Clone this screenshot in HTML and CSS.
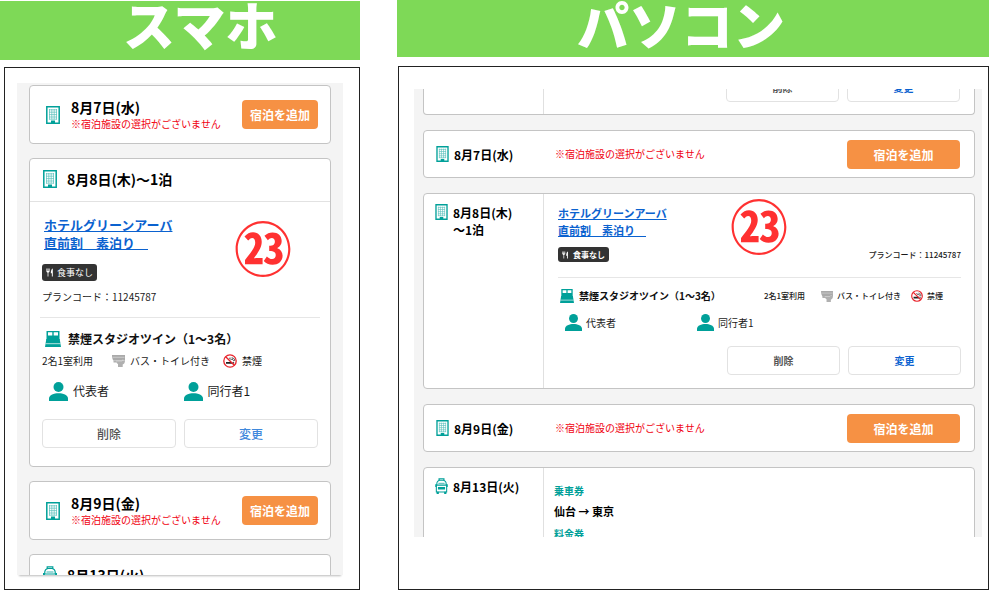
FILE: index.html
```html
<!DOCTYPE html>
<html lang="ja">
<head>
<meta charset="utf-8">
<meta name="viewport" content="width=device-width, initial-scale=1">
<title>宿泊の選択</title>
<link rel="stylesheet" href="styles.css">
</head>
<body>
<svg class="defs" aria-hidden="true">
  <symbol id="i-hotel" viewBox="0 0 14 18">
    <path d="M.8.8h12.4v16.4H.8z" fill="#fff" stroke="currentColor" stroke-width="1.500"/>
    <path d="M3 3.800h8M3 6.200h8M3 8.600h8M3 11h8M3 13.200h8M3.500 3v10.500M5.800 3v10.500M8.200 3v10.500M10.500 3v10.500" stroke="currentColor" stroke-width=".7" opacity=".65"/>
    <path d="M5 14.500h4V18H5z" fill="currentColor"/>
  </symbol>
  <symbol id="i-bed" viewBox="0 0 16 16">
    <path d="M1.500 0h13v9h-13z" fill="currentColor"/>
    <path d="M3 1.300h4.300v3.200H3zM8.700 1.300H13v3.200H8.700z" fill="#fff"/>
    <path d="M1.300 8h13.400l1.300 8H0z" fill="currentColor"/>
    <path d="M.5 12.700h15" stroke="#fff" stroke-width=".7"/>
  </symbol>
  <symbol id="i-person" viewBox="0 0 19 19">
    <circle cx="9.500" cy="5" r="5" fill="currentColor"/>
    <path d="M0 19v-2.500C0 13 5 11.200 9.500 11.200S19 13 19 16.500V19z" fill="currentColor"/>
  </symbol>
  <symbol id="i-bath" viewBox="0 0 13 12">
    <path d="M0 0h13v5.500H11.500L11 4.500 10 5.600H1.500C.6 4.500 0 3 0 0z" fill="#aaa"/>
    <path d="M1.500 5.500h3v2h-3zM4 5.500h9c0 2.500-.9 3.500-2.300 3.900V12H6V9C4.800 8.300 4 7.200 4 5.500z" fill="#b0b0b0"/>
    <path d="M.5 2.300h12M4 6h6" stroke="#e0e0e0" stroke-width=".6"/>
  </symbol>
  <symbol id="i-nosmoke" viewBox="0 0 14 14">
    <path d="M3 8h6.500v1.800H3zM10.200 8h.9v1.800h-.9z" fill="#222"/>
    <path d="M7 3.500c-1.200 1.500 1 1.800 2.200 1.900 1.200.1 1.300.9 1.300 1.800M9 3.300c-.3 1 .9 1 1.800 1.200.9.300.9 1.500.8 2.500" fill="none" stroke="#222" stroke-width=".8"/>
    <circle cx="7" cy="7" r="6.200" fill="none" stroke="#e8222a" stroke-width="1.300"/>
    <path d="M2.700 2.700l8.600 8.600" stroke="#e8222a" stroke-width="1.400"/>
  </symbol>
  <symbol id="i-meal" viewBox="0 0 10 10">
    <path d="M1 0v3.500M2.500 0v3.500M4 0v3.500M2.500 3v7" stroke="currentColor" stroke-width="1"/>
    <path d="M.6 3h3.800c0 1.500-.8 2-1.900 2S.6 4.500.6 3z" fill="currentColor"/>
    <path d="M8.500 0v10H7.300V6H6c0-3 .7-5.500 2.500-6z" fill="currentColor"/>
  </symbol>
  <symbol id="i-train" viewBox="0 0 14 18">
    <path d="M4.200 2.500V.8h5.600v1.700M1.700 8V7c0-2.800 1.600-4.200 3.300-4.500h4c1.700.3 3.300 1.700 3.300 4.500v1" fill="none" stroke="currentColor" stroke-width="1.200"/>
    <path d="M1.200 8h11.600v7.800H1.200z" fill="none" stroke="currentColor" stroke-width="1.200"/>
    <path d="M0 7h1.500v3H0zM12.500 7H14v3h-1.500zM3 10h8v3H3zM1.500 15.500H4V18H1.500zM10 15.500h2.500V18H10z" fill="currentColor"/>
    <path d="M3.500 6h7" stroke="currentColor" stroke-width=".8"/>
  </symbol>
</svg>

<section class="device phone">
  <h1 class="banner">スマホ</h1>
  <div class="frame">
    <div class="view">
      <article class="card row">
        <svg class="ico hotel"><use href="#i-hotel"/></svg>
        <div class="grow">
          <h2 class="date">8月7日(水)</h2>
          <p class="alert">※宿泊施設の選択がございません</p>
        </div>
        <button class="btn add" type="button">宿泊を追加</button>
      </article>

      <article class="card stay">
        <header class="head">
          <svg class="ico hotel"><use href="#i-hotel"/></svg>
          <h2 class="date">8月8日(木)～1泊</h2>
        </header>
        <div class="body">
          <a class="hotel-link" href="#">ホテルグリーンアーバ<br>直前割　素泊り　</a>
          <span class="badge"><svg class="ico meal"><use href="#i-meal"/></svg>食事なし</span>
          <p class="code">プランコード：11245787</p>
          <hr class="line">
          <h3 class="room"><svg class="ico bed"><use href="#i-bed"/></svg>禁煙スタジオツイン（1～3名）</h3>
          <div class="facts">
            <span class="use">2名1室利用</span>
            <span class="fact"><svg class="ico bath"><use href="#i-bath"/></svg>バス・トイレ付き</span>
            <span class="fact"><svg class="ico nosmoke"><use href="#i-nosmoke"/></svg>禁煙</span>
          </div>
          <div class="people">
            <span class="person"><svg class="ico human"><use href="#i-person"/></svg>代表者</span>
            <span class="person"><svg class="ico human"><use href="#i-person"/></svg>同行者1</span>
          </div>
          <div class="actions">
            <button class="btn" type="button">削除</button>
            <button class="btn change" type="button">変更</button>
          </div>
        </div>
        <span class="mark">㉓</span>
      </article>

      <article class="card row">
        <svg class="ico hotel"><use href="#i-hotel"/></svg>
        <div class="grow">
          <h2 class="date">8月9日(金)</h2>
          <p class="alert">※宿泊施設の選択がございません</p>
        </div>
        <button class="btn add" type="button">宿泊を追加</button>
      </article>

      <article class="card">
        <header class="head">
          <svg class="ico train"><use href="#i-train"/></svg>
          <h2 class="date">8月13日(火)</h2>
        </header>
      </article>
    </div>
  </div>
</section>

<section class="device desktop">
  <h1 class="banner">パソコン</h1>
  <div class="frame">
    <div class="view">
      <article class="card split cut">
        <div class="side"></div>
        <div class="actions">
          <button class="btn" type="button">削除</button>
          <button class="btn change" type="button">変更</button>
        </div>
      </article>

      <article class="card row">
        <svg class="ico hotel"><use href="#i-hotel"/></svg>
        <h2 class="date">8月7日(水)</h2>
        <p class="alert grow">※宿泊施設の選択がございません</p>
        <button class="btn add" type="button">宿泊を追加</button>
      </article>

      <article class="card split stay">
        <header class="side">
          <svg class="ico hotel"><use href="#i-hotel"/></svg>
          <h2 class="date">8月8日(木)<br>～1泊</h2>
        </header>
        <div class="body">
          <a class="hotel-link" href="#">ホテルグリーンアーバ<br>直前割　素泊り　</a>
          <div class="plan">
            <span class="badge"><svg class="ico meal"><use href="#i-meal"/></svg>食事なし</span>
            <p class="code">プランコード：11245787</p>
          </div>
          <hr class="line">
          <div class="room-row">
            <h3 class="room"><svg class="ico bed"><use href="#i-bed"/></svg>禁煙スタジオツイン（1～3名）</h3>
            <div class="facts">
              <span class="use">2名1室利用</span>
              <span class="fact"><svg class="ico bath"><use href="#i-bath"/></svg>バス・トイレ付き</span>
              <span class="fact"><svg class="ico nosmoke"><use href="#i-nosmoke"/></svg>禁煙</span>
            </div>
          </div>
          <div class="people">
            <span class="person"><svg class="ico human"><use href="#i-person"/></svg>代表者</span>
            <span class="person"><svg class="ico human"><use href="#i-person"/></svg>同行者1</span>
          </div>
          <div class="actions">
            <button class="btn" type="button">削除</button>
            <button class="btn change" type="button">変更</button>
          </div>
        </div>
        <span class="mark">㉓</span>
      </article>

      <article class="card row">
        <svg class="ico hotel"><use href="#i-hotel"/></svg>
        <h2 class="date">8月9日(金)</h2>
        <p class="alert grow">※宿泊施設の選択がございません</p>
        <button class="btn add" type="button">宿泊を追加</button>
      </article>

      <article class="card split">
        <header class="side">
          <svg class="ico train"><use href="#i-train"/></svg>
          <h2 class="date">8月13日(火)</h2>
        </header>
        <dl class="ticket">
          <dt>乗車券</dt>
          <dd>仙台 → 東京</dd>
          <dt>料金券</dt>
        </dl>
      </article>
    </div>
  </div>
</section>
</body>
</html>
```
FILE: styles.css
```css
* { box-sizing: border-box; }

body {
  margin: 0;
  padding: 0 16px 19px 0;
  height: 100vh;
  display: grid;
  grid-template-columns: 360fr 592fr;
  gap: 37px;
  background: #fff;
  color: #1a1a1a;
  font-family: "Noto Sans CJK JP", "Noto Sans", sans-serif;
  font-size: 10px;
  line-height: 16px;
}

h1, h2, h3, p, dl, dd { margin: 0; }
button { font-family: inherit; }
.defs { position: absolute; width: 0; height: 0; }

.device {
  display: flex;
  flex-direction: column;
  min-width: 0;
  min-height: 0;
}

.banner {
  flex: none;
  height: 59px;
  background: #7ed957;
  color: #fff;
  font-size: 52px;
  font-weight: 900;
  line-height: 46px;
  white-space: nowrap;
}

.frame {
  flex: 1;
  min-height: 0;
  display: flex;
  border: 1px solid #222;
}

.view {
  flex: 1;
  min-width: 0;
  display: flex;
  flex-direction: column;
  overflow: hidden;
  background: #f4f4f4;
}

.card {
  position: relative;
  flex: none;
  background: #fff;
  border: 1px solid #c4c4c4;
  border-radius: 4px;
}

.ico { flex: none; color: #00a099; }
.row { display: flex; align-items: center; }
.grow { flex: 1; }
.date { font-weight: 700; color: #000; white-space: nowrap; }
.alert { color: #f00010; white-space: nowrap; }

.btn {
  height: 29px;
  padding: 0;
  border: 1px solid #e2e2e2;
  border-radius: 4px;
  background: #fff;
  color: #555;
  font-weight: 500;
}

.btn.add {
  border: 0;
  background: #f69144;
  color: #fff;
  font-size: 12px;
  font-weight: 700;
}

.hotel-link { display: block; width: max-content; color: #0b62cf; font-weight: 700; }

.badge {
  display: flex;
  align-items: center;
  width: max-content;
  border-radius: 3px;
  background: #333;
  color: #fff;
}

.badge .ico { color: #fff; }
.line { height: 1px; border: 0; background: #e6e6e6; }
.room { display: flex; align-items: center; font-weight: 700; color: #111; white-space: nowrap; }
.facts, .fact, .person { display: flex; align-items: center; white-space: nowrap; }

.mark {
  position: absolute;
  color: #ff3131;
  font-size: 58px;
  font-weight: 700;
  line-height: 60px;
}

/* phone */
.phone { padding-top: 1px; }
.phone .banner { padding-left: 123px; }
.phone .frame { margin: 7px 0 0 4px; padding: 15px 16px 14px 12px; }
.phone .view { gap: 14px; padding: 2px 12px 0; box-shadow: 0 3px 2px -2px #bbb; }
.phone .row { height: 59px; padding: 0 12px 0 16px; }
.phone .row .ico { margin-right: 11px; }
.phone .ico.hotel, .phone .ico.train { width: 14px; height: 18px; }
.phone .date { font-size: 14px; line-height: 18px; }
.phone .btn { font-size: 12px; }
.phone .add { width: 76px; }
.phone .head {
  display: flex;
  align-items: center;
  gap: 10px;
  height: 43px;
  padding: 0 0 2px 13px;
  border-bottom: 1px solid #e2e2e2;
}
.phone .body { padding: 14px 12px 18px; }
.phone .hotel-link { margin-left: 2px; font-size: 13px; line-height: 18px; }
.phone .badge { gap: 3px; height: 17px; margin-top: 12px; padding: 0 4px; font-size: 9px; }
.phone .ico.meal { width: 8px; height: 9px; }
.phone .code { margin-top: 8px; }
.phone .line { margin: 12px -2px; }
.phone .room { gap: 7px; padding-left: 3px; font-size: 12px; line-height: 18px; }
.phone .ico.bed { width: 16px; height: 16px; }
.phone .facts { margin-top: 5px; gap: 13px; }
.phone .use { margin-right: 6px; }
.phone .fact { gap: 5px; }
.phone .ico.bath { width: 13px; height: 12px; }
.phone .ico.nosmoke { width: 14px; height: 14px; }
.phone .people { display: grid; grid-template-columns: 1fr 1fr; margin-top: 12px; padding-left: 7px; }
.phone .person { gap: 5px; height: 20px; font-size: 12px; }
.phone .ico.human { width: 19px; height: 19px; }
.phone .actions { display: grid; grid-template-columns: 1fr 1fr; gap: 8px; margin-top: 18px; }
.phone .change { color: #3f88dc; }
.phone .mark { right: 38px; top: 57px; }

/* desktop */
.desktop .banner { height: 57px; padding-left: 180px; line-height: 48px; }
.desktop .frame { margin: 9px 0 0 1px; padding: 22px 6px 52px 15px; }
.desktop .view { gap: 15px; padding: 0 7px 0 9px; }
.desktop .date { font-size: 12px; line-height: 17px; }
.desktop .ico.hotel, .desktop .ico.train { width: 13px; height: 16px; }
.desktop .row { height: 48px; padding: 0 14px 0 12px; }
.desktop .row .date { width: 101px; margin-left: 5px; }
.desktop .add { width: 113px; }
.desktop .split { display: grid; grid-template-columns: 120px 1fr; }
.desktop .side {
  display: flex;
  align-items: flex-start;
  gap: 5px;
  padding: 10px 0 0 11px;
  border-right: 1px solid #e0e0e0;
}
.desktop .actions { display: flex; justify-content: flex-end; gap: 8px; }
.desktop .actions .btn { width: 113px; font-size: 10px; font-weight: 700; }
.desktop .actions .change { color: #0b62cf; }
.desktop .cut { height: 26px; border-top: 0; border-radius: 0 0 4px 4px; overflow: hidden; }
.desktop .cut .actions { height: 25px; padding: 0 14px 12px; align-items: flex-end; }
.desktop .body { padding: 11px 13px 13px 14px; }
.desktop .hotel-link { font-size: 11px; line-height: 17px; }
.desktop .plan { display: flex; justify-content: space-between; align-items: center; margin-top: 8px; }
.desktop .badge { gap: 4px; height: 15px; padding: 0 4px; font-size: 8px; font-weight: 700; }
.desktop .ico.meal { width: 7px; height: 8px; }
.desktop .code { font-size: 8px; line-height: 15px; font-weight: 500; }
.desktop .line { margin: 15px 0 10px; }
.desktop .room-row { display: flex; justify-content: space-between; padding: 0 18px 0 2px; }
.desktop .room { gap: 5px; font-size: 10px; }
.desktop .ico.bed { width: 14px; height: 14px; }
.desktop .facts { gap: 10px; font-size: 8px; font-weight: 500; }
.desktop .use { margin-right: 6px; }
.desktop .fact { gap: 4px; }
.desktop .ico.bath { width: 12px; height: 11px; }
.desktop .ico.nosmoke { width: 12px; height: 12px; }
.desktop .people { display: grid; grid-template-columns: 132px 1fr; margin-top: 10px; padding-left: 7px; }
.desktop .person { gap: 4px; height: 17px; }
.desktop .ico.human { width: 17px; height: 17px; }
.desktop .body .actions { margin-top: 15px; }
.desktop .mark { left: 306px; top: 0; }
.desktop .ticket { padding: 15px 0 12px 10px; font-weight: 700; }
.desktop .ticket dt { color: #00a099; }
.desktop .ticket dd { margin: 3px 0 6px; font-size: 11px; line-height: 18px; color: #000; }
```
